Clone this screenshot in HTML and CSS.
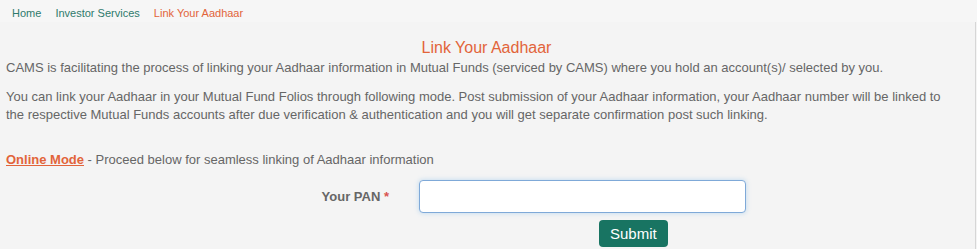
FILE: index.html
```html
<!DOCTYPE html>
<html lang="en">
<head>
  <meta charset="UTF-8">
  <meta name="viewport" content="width=device-width, initial-scale=1.0">
  <title>Link Your Aadhaar</title>
  <link rel="stylesheet" href="styles.css">
</head>
<body>

  <div class="breadcrumb">
    <a href="#">Home</a>
    <a href="#">Investor Services</a>
    <span class="current">Link Your Aadhaar</span>
  </div>

  <div class="content">
    <h1>Link Your Aadhaar</h1>
    <p>CAMS is facilitating the process of linking your Aadhaar information in Mutual Funds (serviced by CAMS) where you hold an account(s)/ selected by you.</p>
    <p>You can link your Aadhaar in your Mutual Fund Folios through following mode. Post submission of your Aadhaar information, your Aadhaar number will be linked to the respective Mutual Funds accounts after due verification &amp; authentication and you will get separate confirmation post such linking.</p>

    <p class="mode"><a href="#">Online Mode</a> - Proceed below for seamless linking of Aadhaar information</p>

    <form class="pan-form">
      <label for="pan">Your PAN <span class="req">*</span></label>
      <input type="text" id="pan">
      <div></div>
      <div class="actions">
        <button type="submit">Submit</button>
      </div>
    </form>
  </div>

</body>
</html>
```

FILE: styles.css
```css
* {
  margin: 0;
  padding: 0;
  box-sizing: border-box;
}

body {
  font-family: "Liberation Sans", Arial, sans-serif;
  background-color: #f4f4f4;
  color: #666;
  font-size: 13px;
}

.breadcrumb {
  height: 22px;
  padding: 7px 0 0 12px;
  font-size: 11px;
  background-color: #f6f6f6;
}

.breadcrumb a {
  color: #2f7a6c;
  text-decoration: none;
  margin-right: 11px;
}

.breadcrumb .current {
  color: #e2643a;
}

.content {
  border-right: 1px solid #d6d6d6;
  margin-right: 1px;
  padding: 17px 24px 4px 6px;
}

h1 {
  font-size: 16px;
  font-weight: normal;
  color: #e2643a;
  text-align: center;
  margin-right: -16px;
  line-height: 18px;
  margin-bottom: 2px;
}

p {
  line-height: 18px;
  margin-bottom: 11px;
}

.mode {
  margin-top: 27px;
  margin-bottom: 11px;
}

.mode a {
  color: #e2643a;
  font-weight: bold;
}

.pan-form {
  display: grid;
  grid-template-columns: 383px 327px;
  column-gap: 30px;
  row-gap: 7px;
  align-items: center;
}

.pan-form label {
  text-align: right;
  font-weight: bold;
  color: #666;
}

.req {
  color: #d9534f;
}

.pan-form input {
  height: 33px;
  border: 1px solid #7fa9d8;
  border-radius: 4px;
  background: #fff;
  box-shadow: 0 0 5px rgba(102, 175, 233, 0.4);
}

.actions {
  padding-left: 180px;
}

.actions button {
  background-color: #187462;
  color: #fff;
  border: none;
  border-radius: 4px;
  font-family: inherit;
  font-size: 15px;
  padding: 0 11px;
  height: 27px;
}
```
